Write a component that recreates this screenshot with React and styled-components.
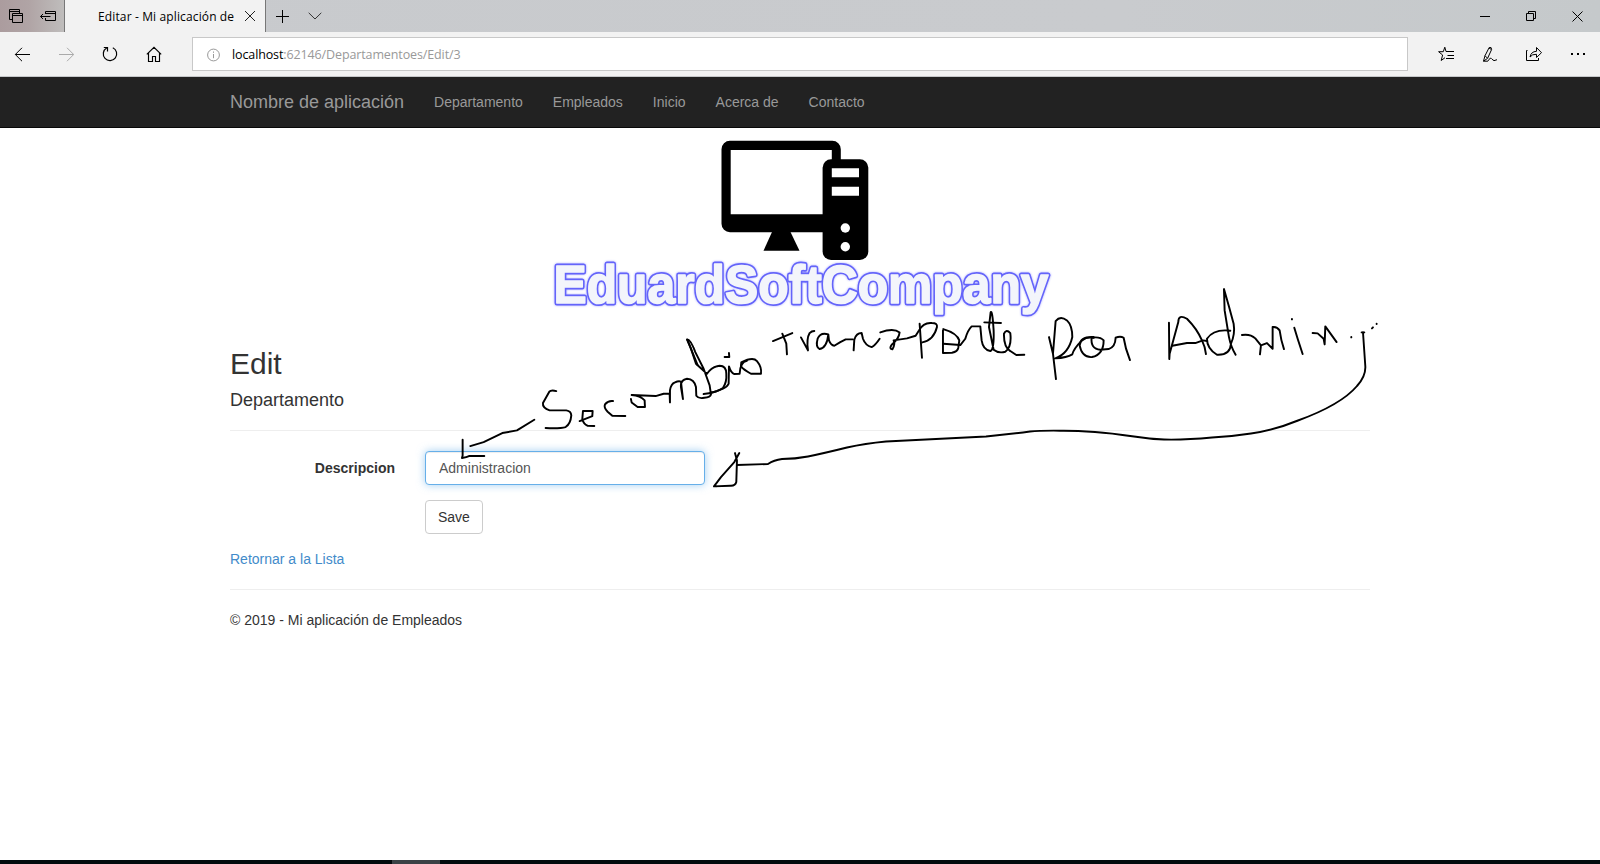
import React from "react";
import styled, { createGlobalStyle } from "styled-components";

const GlobalStyle = createGlobalStyle`
  * { box-sizing: border-box; }
  body {
    margin: 0;
    background: #fff;
    color: #333;
    font: 14px/20px "Liberation Sans", Arial, sans-serif;
    overflow: hidden;
  }
`;

const Screen = styled.div`
  position: relative;
  display: flex;
  flex-direction: column;
  width: 1600px;
  height: 864px;
`;

/* Browser chrome */
const TabStrip = styled.header`
  display: flex;
  height: 32px;
  background: linear-gradient(90deg, #c8cacd, #c9cbce 70%, #c5c9cb);
`;
const TabTools = styled.div`
  display: flex;
  width: 65px;
  border-right: 1px solid #777;
  background: linear-gradient(90deg, #ab9c9e, #b0a4a5 45%, #bfbdbc);
`;
const BrowserTab = styled.div`
  display: flex;
  align-items: center;
  width: 201px;
  padding: 0 3px 0 33px;
  background: #f2f2f2;
  border-right: 1px solid #777;
`;
const TabTitle = styled.div`
  flex: 1;
  overflow: hidden;
  margin-right: 4px;
  padding-top: 2px;
  white-space: nowrap;
  color: #000;
  font: 12px/20px "Open Sans", sans-serif;
  letter-spacing: 0.13px;
`;
const WindowControls = styled.div`
  display: flex;
  margin-left: auto;
`;
const IconButton = styled.div`
  display: flex;
  align-items: center;
  justify-content: center;
  flex: none;
  width: ${(p) => p.$w || 44}px;
  height: 100%;
  color: ${(p) => p.$color || "#000"};
`;
const Toolbar = styled.div`
  display: flex;
  align-items: center;
  height: 45px;
  background: #f2f2f2;
  border-bottom: 1px solid #c6c8ca;
`;
const AddressBar = styled.div`
  display: flex;
  align-items: center;
  width: 1216px;
  height: 34px;
  margin: 0 16px;
  padding-left: 13px;
  gap: 11px;
  background: #fff;
  border: 1px solid #c8c8c8;
  color: #999;
  font: 12.5px/20px "Open Sans", sans-serif;
  letter-spacing: -0.12px;
`;
const Address = styled.div`
  padding-top: 2px;
`;
const Host = styled.span`
  color: #000;
`;

/* Page */
const NavBar = styled.nav`
  height: 51px;
  background: #222;
  border-bottom: 1px solid #080808;
`;
const Container = styled.div`
  width: 1170px;
  margin: 0 auto;
  padding: 0 15px;
`;
const NavRow = styled(Container)`
  display: flex;
  align-items: center;
  height: 50px;
  color: #999;
`;
const Brand = styled.div`
  margin-right: 15px;
  font-size: 18px;
`;
const NavLink = styled.div`
  padding: 0 15px;
`;
const Logo = styled.svg`
  display: block;
  margin: 0 auto;
  overflow: visible;
`;
const LogoName = styled.g`
  font: 700 54px "Liberation Sans", Arial, sans-serif;
  filter: drop-shadow(0 0 0.8px #a8a8ff);
`;
const Title = styled.h2`
  margin: 0 0 10px;
  font-size: 30px;
  line-height: 33px;
  font-weight: 500;
`;
const Subtitle = styled.h4`
  margin: 0 0 20px;
  font-size: 18px;
  line-height: 20px;
  font-weight: 500;
`;
const Rule = styled.hr`
  height: 1px;
  margin: 0 0 20px;
  border: 0;
  background: #eee;
`;
const FormGroup = styled.div`
  display: flex;
  margin-bottom: 15px;
  padding-left: ${(p) => (p.$offset ? 195 : 0)}px;
`;
const Label = styled.label`
  width: 195px;
  padding: 7px 30px 0 0;
  text-align: right;
  font-weight: 700;
`;
const Input = styled.input`
  width: 280px;
  height: 34px;
  padding: 6px 13px;
  border: 1px solid #66afe9;
  border-radius: 4px;
  outline: 0;
  color: #555;
  font: inherit;
  box-shadow: inset 0 1px 1px rgba(0, 0, 0, 0.075), 0 0 8px rgba(102, 175, 233, 0.6);
`;
const SaveButton = styled.button`
  height: 34px;
  padding: 6px 12px;
  border: 1px solid #ccc;
  border-radius: 4px;
  background: #fff;
  color: #333;
  font: inherit;
`;
const BackLink = styled.a`
  display: block;
  margin-bottom: 20px;
  color: #428bca;
`;
const Footer = styled.footer`
  line-height: 20px;
`;
const Taskbar = styled.div`
  height: 4px;
  margin-top: auto;
  padding-left: 392px;
  background: #020a0d;
`;
const ActiveTask = styled.div`
  width: 48px;
  height: 4px;
  background: #3a4246;
`;
const Ink = styled.svg`
  position: absolute;
  inset: 0;
  pointer-events: none;
`;

function Icon({ w = 16, h = 16, children }) {
  return (
    <svg width={w} height={h} viewBox={`0 0 ${w} ${h}`} fill="none" stroke="currentColor">
      {children}
    </svg>
  );
}

function Chrome() {
  return (
    <>
      <TabStrip>
        <TabTools>
          <IconButton $w={32}>
            <Icon>
              <path d="M4.5 11.5h-3v-10h10v4M1.5 3.500h10M4.500 5.500h10v9h-10zM4.500 7.500h10" />
            </Icon>
          </IconButton>
          <IconButton $w={32}>
            <Icon>
              <path d="M5.5 6V3.5h10v9h-10V10M5.5 5.5h10M0.5 8.5h10M3 6l-2.5 2.5L3 11" />
            </Icon>
          </IconButton>
        </TabTools>
        <BrowserTab>
          <TabTitle>Editar - Mi aplicación de Empleados</TabTitle>
          <IconButton $w={24} $color="#222">
            <Icon w={12} h={12}>
              <path d="M1 1l10 10M11 1L1 11" />
            </Icon>
          </IconButton>
        </BrowserTab>
        <IconButton $w={33}>
          <Icon w={13} h={13}>
            <path d="M6.5 0v13M0 6.5h13" />
          </Icon>
        </IconButton>
        <IconButton $w={31} $color="#333">
          <Icon w={14} h={8}>
            <path d="M0.7 0.8L7 7l6.3-6.2" />
          </Icon>
        </IconButton>
        <WindowControls>
          <IconButton $w={46}>
            <Icon w={10} h={11}>
              <path d="M0 5.5h10" />
            </Icon>
          </IconButton>
          <IconButton $w={46}>
            <Icon w={10} h={10}>
              <path d="M0.5 2.5h7v7h-7zM2.5 2.5v-2h7v7h-2" />
            </Icon>
          </IconButton>
          <IconButton $w={46}>
            <Icon w={11} h={11}>
              <path d="M0.5 0.5l10 10M10.5 0.5l-10 10" />
            </Icon>
          </IconButton>
        </WindowControls>
      </TabStrip>
      <Toolbar>
        <IconButton>
          <Icon>
            <path d="M1.300 8.500h14.700M8 1.800L1.300 8.500l6.700 6.700" />
          </Icon>
        </IconButton>
        <IconButton $color="#aaa">
          <Icon>
            <path d="M1 8.500h14.700M9 1.800l6.700 6.700-6.700 6.700" />
          </Icon>
        </IconButton>
        <IconButton>
          <Icon>
            <path d="M10.8 1.8A6.7 6.7 0 1 1 4.6 2.1M1.8 1.5h3.7v4" strokeWidth="1.200" />
          </Icon>
        </IconButton>
        <IconButton>
          <Icon>
            <path d="M0.8 8.4L8 1.3l7.200 7.100M2.500 7v8.500h4v-5h3v5h4V7" strokeWidth="1.150" />
          </Icon>
        </IconButton>
        <AddressBar>
          <Icon w={15} h={15}>
            <circle cx="7.500" cy="8" r="5.900" />
            <path d="M7.500 7v4.200M7.500 4.500v1.300" />
          </Icon>
          <Address>
            <Host>localhost</Host>:62146/Departamentoes/Edit/3
          </Address>
        </AddressBar>
        <IconButton>
          <Icon>
            <path d="M9.8 5.5L8 5.5 6.8 1.2 5.3 5.7H0.6L4.6 9 3.2 14.5 7 11.7M8.5 5.500H16M9.500 9.500H16M8 12.500h8" />
          </Icon>
        </IconButton>
        <IconButton>
          <Icon>
            <path d="M1.5 15.2L3 9.7 7.2 1.5Q9.8 0.7 9.6 3.5L5.6 12.3 1.5 15.2M3 9.7l2.6 2.6M7 2l2.3 1.5M1.5 15.2h4.3Q8.5 10.5 10 13.2T15 13.7" />
          </Icon>
        </IconButton>
        <IconButton>
          <Icon>
            <path d="M1.5 4.5H0.5v10h12V12M4 11Q5 5.5 10.5 5.3V1.5l5 5.2-5 4.8V8.3Q6 8 4 11z" />
          </Icon>
        </IconButton>
        <IconButton>
          <Icon>
            <path d="M1 8h2M7 8h2M13 8h2" strokeWidth="2" />
          </Icon>
        </IconButton>
      </Toolbar>
    </>
  );
}

function CompanyLogo() {
  const name = { x: 11.5, y: 175, textLength: 495, lengthAdjust: "spacingAndGlyphs" };
  return (
    <Logo width="516" height="219" viewBox="0 0 516 219">
      <path
        fillRule="evenodd"
        d="M188 12.700h102.300a8.500 8.500 0 0 1 8.500 8.500v83.100h-110.800a8.500 8.500 0 0 1-8.500-8.500v-74.600a8.500 8.500 0 0 1 8.500-8.500zM188.700 22v64.300h101.100V22z"
      />
      <path d="M230 104h18.500l9 18.700h-36z" />
      <rect x="280.600" y="31.300" width="45.700" height="100.700" rx="8.500" />
      <path fill="#fff" d="M289.800 40.300h27.200v9h-27.200zM289.800 58.700h27.200v9h-27.200z" />
      <circle cx="303.300" cy="100" r="4.700" fill="#fff" />
      <circle cx="303.300" cy="118.700" r="4.700" fill="#fff" />
      <LogoName strokeLinejoin="round">
        <text {...name} fill="none" stroke="#6464fa" strokeWidth="5" aria-hidden="true">
          EduardSoftCompany
        </text>
        <text {...name} fill="#f3f5fb" stroke="#f3f5fb" strokeWidth="1.600">
          EduardSoftCompany
        </text>
      </LogoName>
    </Logo>
  );
}

/* Each handwritten group is drawn on a grid three times finer than the page. */
const inkGroups = [
  {
    at: [530, 320],
    d: [
      "M78 212Q62 208 57 214L38 248Q36 262 58 270L108 270Q122 272 123 285Q121 310 106 320Q90 325 46 323",
      "M148 302L186 287L187 272L158 272L156 296Q160 312 172 316L192 317",
      "M248 242Q234 240 224 252Q220 262 232 274L246 286L285 287",
      "M302 236L304 246L322 260L344 260L343 240Q330 226 304 224L376 227L400 220L418 220L419 246L419 210Q422 190 434 186Q446 180 452 184L458 236L452 200Q450 178 470 175Q492 176 497 200L498 226Q505 236 522 232Q540 230 542 222L538 195L520 145L495 95Q480 55 470 57L482 85L497 130L530 160Q545 138 568 136Q588 136 588 160Q590 185 578 203Q555 218 520 221",
      "M471 58L502 134",
      "M540 217Q590 205 595 190L596 138Q602 158 612 161L628 160Q630 124 650 121",
      "M632 138L633 126Q668 108 680 122Q695 140 692 160L662 160Q640 148 632 138",
      "M583 110L597 110L596 98",
      "M614 398L620 420L618 485Q615 497 600 496L551 498L572 470L612 425L627 398",
    ],
  },
  {
    at: [760, 290],
    d: [
      "M38 152L96 128M66 130L78 160L80 192",
      "M122 141L143 180Q138 145 148 128Q154 122 162 122",
      "M204 132Q180 125 172 145Q165 170 178 176Q200 172 204 132L206 150Q212 165 222 166L240 155L256 147L278 147",
      "M280 180L282 148Q288 128 304 128L308 145Q315 165 334 170Q345 165 358 145",
      "M360 126Q400 112 418 126Q416 145 395 162Q385 175 396 177Q406 160 400 150L440 144L466 136L476 120Q490 95 515 98Q532 98 530 110Q520 150 486 156",
      "M478 100L485 202",
      "M548 120L548 188L575 187Q592 184 594 172L597 150Q590 128 549 116",
      "M549 160L600 164L615 145Q622 120 634 108L660 108L664 150Q668 178 690 182Q702 178 700 120Q696 55 691 66L686 110L700 178Q715 190 735 184Q755 170 750 128Q738 115 731 130Q730 170 750 182L768 194L792 193",
      "M672 96L722 98",
    ],
  },
  {
    at: [1040, 280],
    d: [
      "M26 170L38 220L47 296M38 220L46 122Q60 105 80 120Q96 135 96 170Q85 220 45 234Q80 232 96 222Q100 205 125 180Q140 168 160 172",
      "M160 170Q120 168 118 195Q125 232 155 230Q190 222 190 180Q180 168 154 172Q150 205 180 208L205 206Q225 200 226 172Q240 166 250 172Q255 205 269 239",
      "M386 127L387 236L388 220L414 125Q414 100 440 115Q470 145 485 180Q495 200 497 221",
      "M396 196L440 188L465 188L488 180L500 182",
      "M570 151Q520 145 500 175Q500 205 530 223Q570 225 572 190Q585 160 580 130L566 78L551 26L553 90L566 170Q572 200 586 223",
      "M605 164Q630 160 645 174L662 195L659 222L662 195L680 188L697 205L697 140Q710 138 718 150Q722 180 731 206",
      "M762 142L773 178L787 221",
      "M817 158L832 159L850 175L853 192L855 138L889 185",
      "M755 116v1M933 170v1M995 144l3-3M1009 130v1M964 156h8",
    ],
  },
  {
    at: [220, 330],
    d: ["M942 268L890 300L846 308L790 335L750 347", "M727 328L727 375L725 383Q740 380 746 377L792 377"],
  },
];

function Handwriting() {
  return (
    <Ink width="1600" height="864" fill="none" stroke="#000" strokeLinecap="round" strokeLinejoin="round">
      {inkGroups.map(({ at, d }) => (
        <g key={at[0]} transform={`translate(${at[0] + 0.3} ${at[1] + 0.4}) scale(.33333)`} strokeWidth="5.800">
          {d.map((path) => (
            <path key={path} d={path} />
          ))}
        </g>
      ))}
      <path
        strokeWidth="1.900"
        d="M1363 332.500L1365.300 366Q1366 376 1357 386C1346 399 1324 411 1298 420.500Q1275 430 1251 433.500Q1232 436.500 1212 437.500Q1185 440 1164 439.500Q1150 439 1134 436.500Q1110 433 1095 432Q1075 430.500 1060 430.700Q1040 430.500 1030 431.500Q1008 434.500 986 436.500Q935 439 886 441.500Q865 443.500 847 447.500Q825 453 808 456.500Q795 459 782 459Q774 460 768 464L737 465"
      />
    </Ink>
  );
}

export default function App() {
  return (
    <Screen>
      <GlobalStyle />
      <Chrome />
      <NavBar>
        <NavRow>
          <Brand>Nombre de aplicación</Brand>
          {["Departamento", "Empleados", "Inicio", "Acerca de", "Contacto"].map((item) => (
            <NavLink key={item}>{item}</NavLink>
          ))}
        </NavRow>
      </NavBar>
      <Container>
        <CompanyLogo />
        <Title>Edit</Title>
        <Subtitle>Departamento</Subtitle>
        <Rule />
        <FormGroup>
          <Label>Descripcion</Label>
          <Input defaultValue="Administracion" />
        </FormGroup>
        <FormGroup $offset>
          <SaveButton>Save</SaveButton>
        </FormGroup>
        <BackLink>Retornar a la Lista</BackLink>
        <Rule />
        <Footer>© 2019 - Mi aplicación de Empleados</Footer>
      </Container>
      <Taskbar>
        <ActiveTask />
      </Taskbar>
      <Handwriting />
    </Screen>
  );
}
